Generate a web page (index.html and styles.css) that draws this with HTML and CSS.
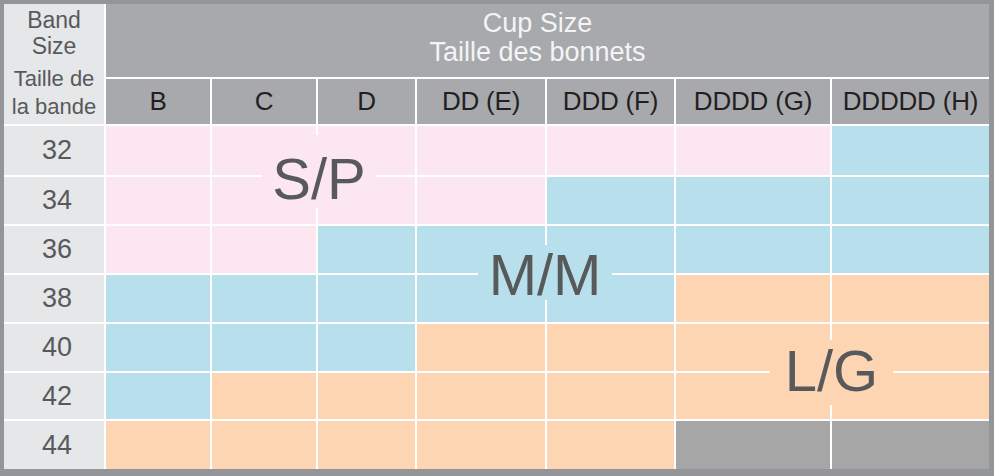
FILE: index.html
```html
<!DOCTYPE html>
<html lang="en">
<head>
<meta charset="utf-8">
<title>Size chart</title>
<link rel="stylesheet" href="styles.css">
</head>
<body>
<div class="frame">
  <div class="chart">
    <div class="band-head">
      <div class="bh-en">Band<br>Size</div>
      <div class="bh-fr">Taille de<br>la bande</div>
    </div>
    <div class="cup-head">Cup Size<br>Taille des bonnets</div>

    <div class="cup">B</div>
    <div class="cup">C</div>
    <div class="cup">D</div>
    <div class="cup">DD (E)</div>
    <div class="cup">DDD (F)</div>
    <div class="cup">DDDD (G)</div>
    <div class="cup">DDDDD (H)</div>

    <div class="band">32</div>
    <div class="c p"></div><div class="c p"></div><div class="c p"></div><div class="c p"></div><div class="c p"></div><div class="c p"></div><div class="c b"></div>

    <div class="band">34</div>
    <div class="c p"></div><div class="c p"></div><div class="c p"></div><div class="c p"></div><div class="c b"></div><div class="c b"></div><div class="c b"></div>

    <div class="band">36</div>
    <div class="c p"></div><div class="c p"></div><div class="c b"></div><div class="c b"></div><div class="c b"></div><div class="c b"></div><div class="c b"></div>

    <div class="band">38</div>
    <div class="c b"></div><div class="c b"></div><div class="c b"></div><div class="c b"></div><div class="c b"></div><div class="c o"></div><div class="c o"></div>

    <div class="band">40</div>
    <div class="c b"></div><div class="c b"></div><div class="c b"></div><div class="c o"></div><div class="c o"></div><div class="c o"></div><div class="c o"></div>

    <div class="band">42</div>
    <div class="c b"></div><div class="c o"></div><div class="c o"></div><div class="c o"></div><div class="c o"></div><div class="c o"></div><div class="c o"></div>

    <div class="band">44</div>
    <div class="c o"></div><div class="c o"></div><div class="c o"></div><div class="c o"></div><div class="c o"></div><div class="c g"></div><div class="c g"></div>

    <div class="label label-sp">S/P</div>
    <div class="label label-mm">M/M</div>
    <div class="label label-lg">L/G</div>
  </div>
</div>
</body>
</html>
```

FILE: styles.css
```css
html, body {
  margin: 0;
  padding: 0;
}

body {
  width: 994px;
  height: 476px;
  overflow: hidden;
  font-family: "Liberation Sans", Arial, sans-serif;
}

.frame {
  box-sizing: border-box;
  width: 994px;
  height: 476px;
  padding: 4px 5px 7px 4px;
  background: #939598;
}

.chart {
  position: relative;
  height: 100%;
  display: grid;
  grid-template-columns: 100px 104px 104px 97px 128px 127px 154px 1fr;
  grid-template-rows: 73px 45px 49px 47px 47px 47px 47px 46px 1fr;
  gap: 2px;
  background: #ffffff;
}

.band-head {
  grid-row: 1 / span 2;
  background: #e6e7e9;
  color: #58595b;
  text-align: center;
  display: flex;
  flex-direction: column;
  gap: 6px;
  padding-top: 3px;
}

.bh-en {
  font-size: 23px;
  line-height: 26px;
}

.bh-fr {
  font-size: 22px;
  line-height: 28px;
}

.cup-head {
  grid-column: 2 / span 7;
  background: #a7a9ac;
  color: #f4f4f5;
  font-size: 27px;
  line-height: 29px;
  text-align: center;
  display: flex;
  align-items: center;
  justify-content: center;
  padding: 0 20px 5px 0;
}

.cup {
  background: #a7a9ac;
  color: #231f20;
  font-size: 26px;
  letter-spacing: -0.2px;
  display: flex;
  align-items: center;
  justify-content: center;
}

.band {
  background: #e6e7e9;
  color: #58595b;
  font-size: 27px;
  display: flex;
  align-items: center;
  justify-content: center;
  padding-left: 6px;
}

.p { background: #fce7f0; }
.b { background: #b7dfec; }
.o { background: #fed5b3; }
.g { background: #a6a6a6; }

.label {
  position: absolute;
  box-sizing: border-box;
  font-size: 58px;
  line-height: 1;
  color: #58595b;
  text-align: center;
}

.label-sp {
  left: 258px;
  top: 131px;
  width: 114px;
  height: 73px;
  padding-top: 15px;
  background: #fce7f0;
}

.label-mm {
  left: 474px;
  top: 241px;
  width: 134px;
  height: 55px;
  padding-top: 1px;
  background: #b7dfec;
}

.label-lg {
  left: 766px;
  top: 336px;
  width: 123px;
  height: 65px;
  padding-top: 2px;
  background: #fed5b3;
}
```
